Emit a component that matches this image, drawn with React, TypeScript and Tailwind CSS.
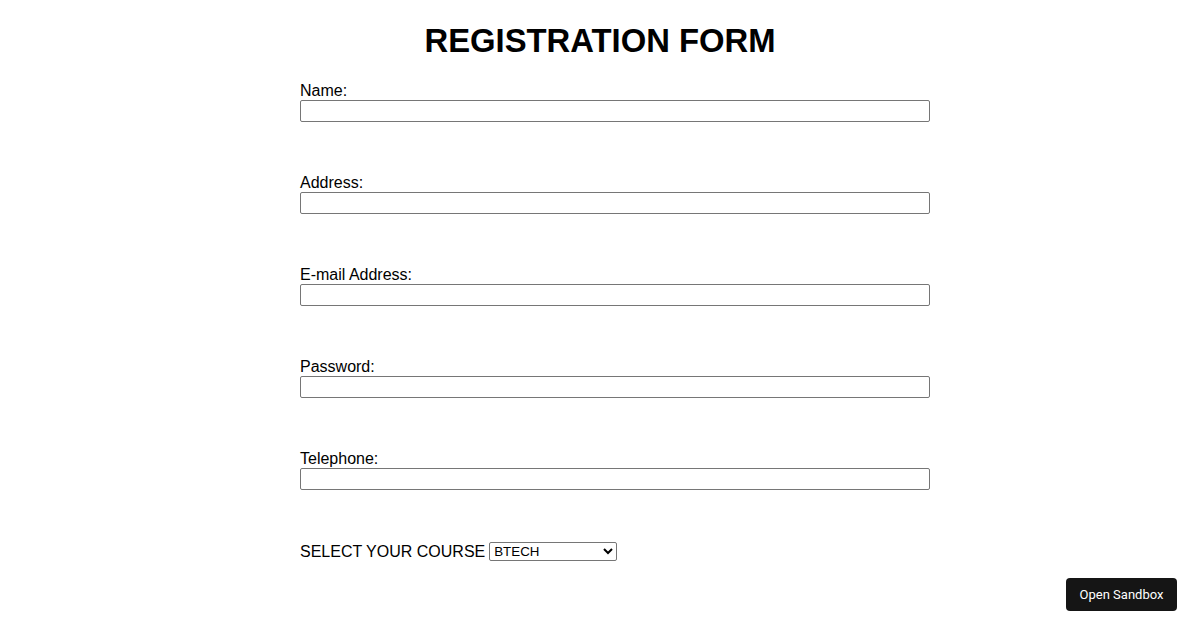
import React from "react";

const fields = ["Name:", "Address:", "E-mail Address:", "Password:", "Telephone:"];

export default function App() {
  return (
    <div className="relative w-[1200px] h-[630px] bg-white text-black overflow-hidden" style={{ fontFamily: '"Liberation Sans", Arial, sans-serif' }}>
      <h1 className="pt-[22px] text-center text-[32.8px] leading-[37px] font-bold">REGISTRATION FORM</h1>
      <div className="ml-[300px] w-[630px] mt-[23px] flex flex-col">
        {fields.map((f, i) => (
          <div key={f} className={i === 0 ? "" : "mt-[52px]"}>
            <div className="text-[16px] leading-[18px]">{f}</div>
            <input
              type={f === "Password:" ? "password" : "text"}
              className="block w-[630px] h-[22px] border border-[#767676] rounded-[2px] bg-white"
            />
          </div>
        ))}
        <div className="mt-[52px] flex items-center h-[19px] text-[16px]">
          <span className="mr-[4px]">SELECT YOUR COURSE</span>
          <select
            className="w-[128px] h-[19px] border border-[#767676] rounded-[2px] text-[13.33px] bg-white text-black"
            style={{ appearance: "auto", fontFamily: '"Liberation Sans", Arial, sans-serif' }}
          >
            <option>BTECH</option>
            <option>BBA</option>
            <option>BCA</option>
          </select>
        </div>
      </div>
      <button className="absolute left-[1066px] top-[578px] w-[111px] h-[33px] rounded-[4px] bg-[#151515] text-white text-[13px]" style={{ fontFamily: 'Roboto, "Liberation Sans", sans-serif' }}>
        Open Sandbox
      </button>
    </div>
  );
}
